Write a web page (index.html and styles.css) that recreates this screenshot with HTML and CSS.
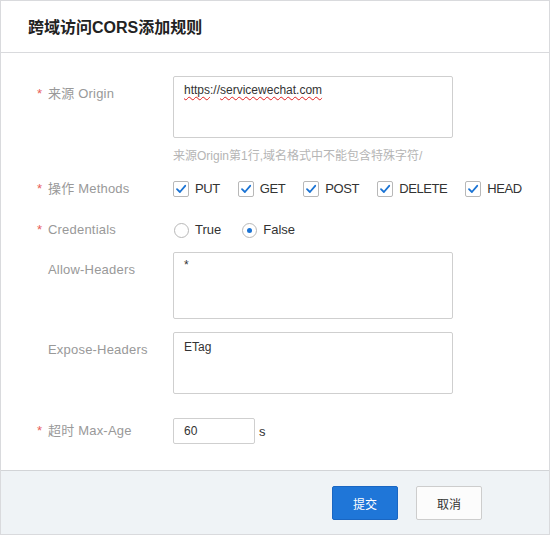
FILE: index.html
```html
<!DOCTYPE html>
<html lang="zh-CN">
<head>
<meta charset="utf-8">
<title>跨域访问CORS添加规则</title>
<link rel="stylesheet" href="styles.css">
</head>
<body>
<div class="dialog">
  <div class="header">跨域访问CORS添加规则</div>
  <div class="body">
    <div class="row row-origin">
      <div class="label label-top"><span class="req">*</span>来源 Origin</div>
      <div class="control">
        <div class="textbox tb-origin"><span class="spell">https</span>://<span class="spell">servicewechat.com</span></div>
        <div class="hint">来源Origin第1行,域名格式中不能包含特殊字符/</div>
      </div>
    </div>
    <div class="row row-methods">
      <div class="label"><span class="req">*</span>操作 Methods</div>
      <div class="control options">
        <label class="opt"><span class="cb"><svg viewBox="0 0 16 16" width="16" height="16"><path d="M4 8.2 L6.9 11 L12.2 4.8" fill="none" stroke="#1a73d4" stroke-width="1.8" stroke-linecap="round" stroke-linejoin="round"/></svg></span>PUT</label>
        <label class="opt"><span class="cb"><svg viewBox="0 0 16 16" width="16" height="16"><path d="M4 8.2 L6.9 11 L12.2 4.8" fill="none" stroke="#1a73d4" stroke-width="1.8" stroke-linecap="round" stroke-linejoin="round"/></svg></span>GET</label>
        <label class="opt"><span class="cb"><svg viewBox="0 0 16 16" width="16" height="16"><path d="M4 8.2 L6.9 11 L12.2 4.8" fill="none" stroke="#1a73d4" stroke-width="1.8" stroke-linecap="round" stroke-linejoin="round"/></svg></span>POST</label>
        <label class="opt"><span class="cb"><svg viewBox="0 0 16 16" width="16" height="16"><path d="M4 8.2 L6.9 11 L12.2 4.8" fill="none" stroke="#1a73d4" stroke-width="1.8" stroke-linecap="round" stroke-linejoin="round"/></svg></span>DELETE</label>
        <label class="opt"><span class="cb"><svg viewBox="0 0 16 16" width="16" height="16"><path d="M4 8.2 L6.9 11 L12.2 4.8" fill="none" stroke="#1a73d4" stroke-width="1.8" stroke-linecap="round" stroke-linejoin="round"/></svg></span>HEAD</label>
      </div>
    </div>
    <div class="row row-cred">
      <div class="label"><span class="req">*</span>Credentials</div>
      <div class="control options">
        <label class="opt"><span class="radio"></span>True</label>
        <label class="opt"><span class="radio on"></span>False</label>
      </div>
    </div>
    <div class="row row-allow">
      <div class="label label-top nreq">Allow-Headers</div>
      <div class="control"><div class="textbox tb-allow">*</div></div>
    </div>
    <div class="row row-expose">
      <div class="label label-top nreq">Expose-Headers</div>
      <div class="control"><div class="textbox tb-expose">ETag</div></div>
    </div>
    <div class="row row-age">
      <div class="label"><span class="req">*</span>超时 Max-Age</div>
      <div class="control inline"><div class="textbox tb-age">60</div><span class="unit">s</span></div>
    </div>
  </div>
  <div class="footer">
    <button class="btn btn-primary">提交</button>
    <button class="btn btn-default">取消</button>
  </div>
</div>
</body>
</html>
```
FILE: styles.css
```css
html, body {
  margin: 0;
  padding: 0;
  background: #ffffff;
}
body {
  font-family: "Liberation Sans", "Noto Sans CJK SC", sans-serif;
  font-size: 13px;
  color: #333;
}
.dialog {
  width: 550px;
  height: 535px;
  box-sizing: border-box;
  border: 1px solid #d9dadd;
  display: flex;
  flex-direction: column;
  background: #fff;
}
.header {
  box-sizing: content-box;
  height: 50px;
  padding-bottom: 1px;
  border-bottom: 1px solid #d9dadd;
  padding-left: 27px;
  font-size: 16px;
  font-weight: bold;
  color: #222;
  display: flex;
  align-items: center;
  flex: none;
}
.body {
  flex: 1;
  padding: 23px 0 0 36px;
}
.row {
  display: flex;
  align-items: flex-start;
}
.label {
  width: 136px;
  flex: none;
  color: #999;
  font-size: 13px;
  line-height: 20px;
  white-space: nowrap;
  letter-spacing: 0.2px;
}
.label-top {
  padding-top: 8px;
}
.req {
  color: #e8605a;
  margin-right: 5px;
  display: inline-block;
  width: 6px;
}
.nreq {
  padding-left: 11px;
  box-sizing: border-box;
}
.control {
  flex: 1;
}
.textbox {
  box-sizing: border-box;
  width: 280px;
  border: 1px solid #cfcfcf;
  border-radius: 2px;
  padding: 5px 10px;
  font-size: 12px;
  line-height: 16px;
  color: #333;
  background: #fff;
}
.spell {
  text-decoration: underline wavy #e02020;
  text-decoration-thickness: 1px;
  text-underline-offset: 2px;
}
.tb-origin { height: 62px; }
.hint {
  margin-top: 9px;
  font-size: 12px;
  line-height: 18px;
  color: #b5b5b5;
}
.row-methods { margin-top: 14px; }
.row-cred { margin-top: 21px; }
.row-allow { margin-top: 12px; }
.row-expose { margin-top: 13px; }
.row-age { margin-top: 24px; }
.options {
  display: flex;
  align-items: center;
  gap: 18px;
  height: 20px;
}
.opt {
  display: flex;
  align-items: center;
  font-size: 13px;
  color: #333;
  line-height: 20px;
  letter-spacing: -0.4px;
}
.cb {
  width: 16px;
  height: 16px;
  box-sizing: border-box;
  border: 1px solid #b8b8b8;
  border-radius: 2px;
  margin-right: 6px;
  display: flex;
  align-items: center;
  justify-content: center;
  background: #fff;
}
.cb svg { display: block; flex: none; }
.radio {
  width: 15px;
  height: 15px;
  box-sizing: border-box;
  border: 1px solid #b8b8b8;
  border-radius: 50%;
  margin-left: 1px;
  margin-right: 6px;
  display: flex;
  align-items: center;
  justify-content: center;
  background: #fff;
}
.radio.on::after {
  content: "";
  width: 5px;
  height: 5px;
  border-radius: 50%;
  background: #1a73d4;
}
.row-cred .options { gap: 20px; }
.row-cred .opt { letter-spacing: 0; }
.tb-allow { height: 67px; padding-top: 4px; }
.tb-expose { height: 62px; padding-top: 6px; }
.row-age .label { padding-top: 3px; }
.inline {
  display: flex;
  align-items: center;
}
.tb-age {
  width: 82px;
  height: 26px;
  padding: 4px 10px;
  font-size: 12px;
  line-height: 16px;
}
.unit {
  margin-left: 4px;
  font-size: 13px;
  color: #333;
}
.footer {
  flex: none;
  box-sizing: content-box;
  height: 48px;
  border-top: 1px solid #d2d4d7;
  background: #eff3f6;
  display: flex;
  justify-content: flex-end;
  align-items: flex-start;
  padding: 15px 67px 0 0;
  gap: 18px;
}
.btn {
  width: 66px;
  height: 34px;
  box-sizing: border-box;
  border-radius: 2px;
  font-family: "Liberation Sans", "Noto Sans CJK SC", sans-serif;
  font-size: 12px;
  padding: 0;
  cursor: pointer;
}
.btn-primary {
  background: #1f76d8;
  border: 1px solid #1a66c2;
  color: #fff;
}
.btn-default {
  background: #fcfcfc;
  border: 1px solid #cdcdcd;
  color: #333;
}
```
